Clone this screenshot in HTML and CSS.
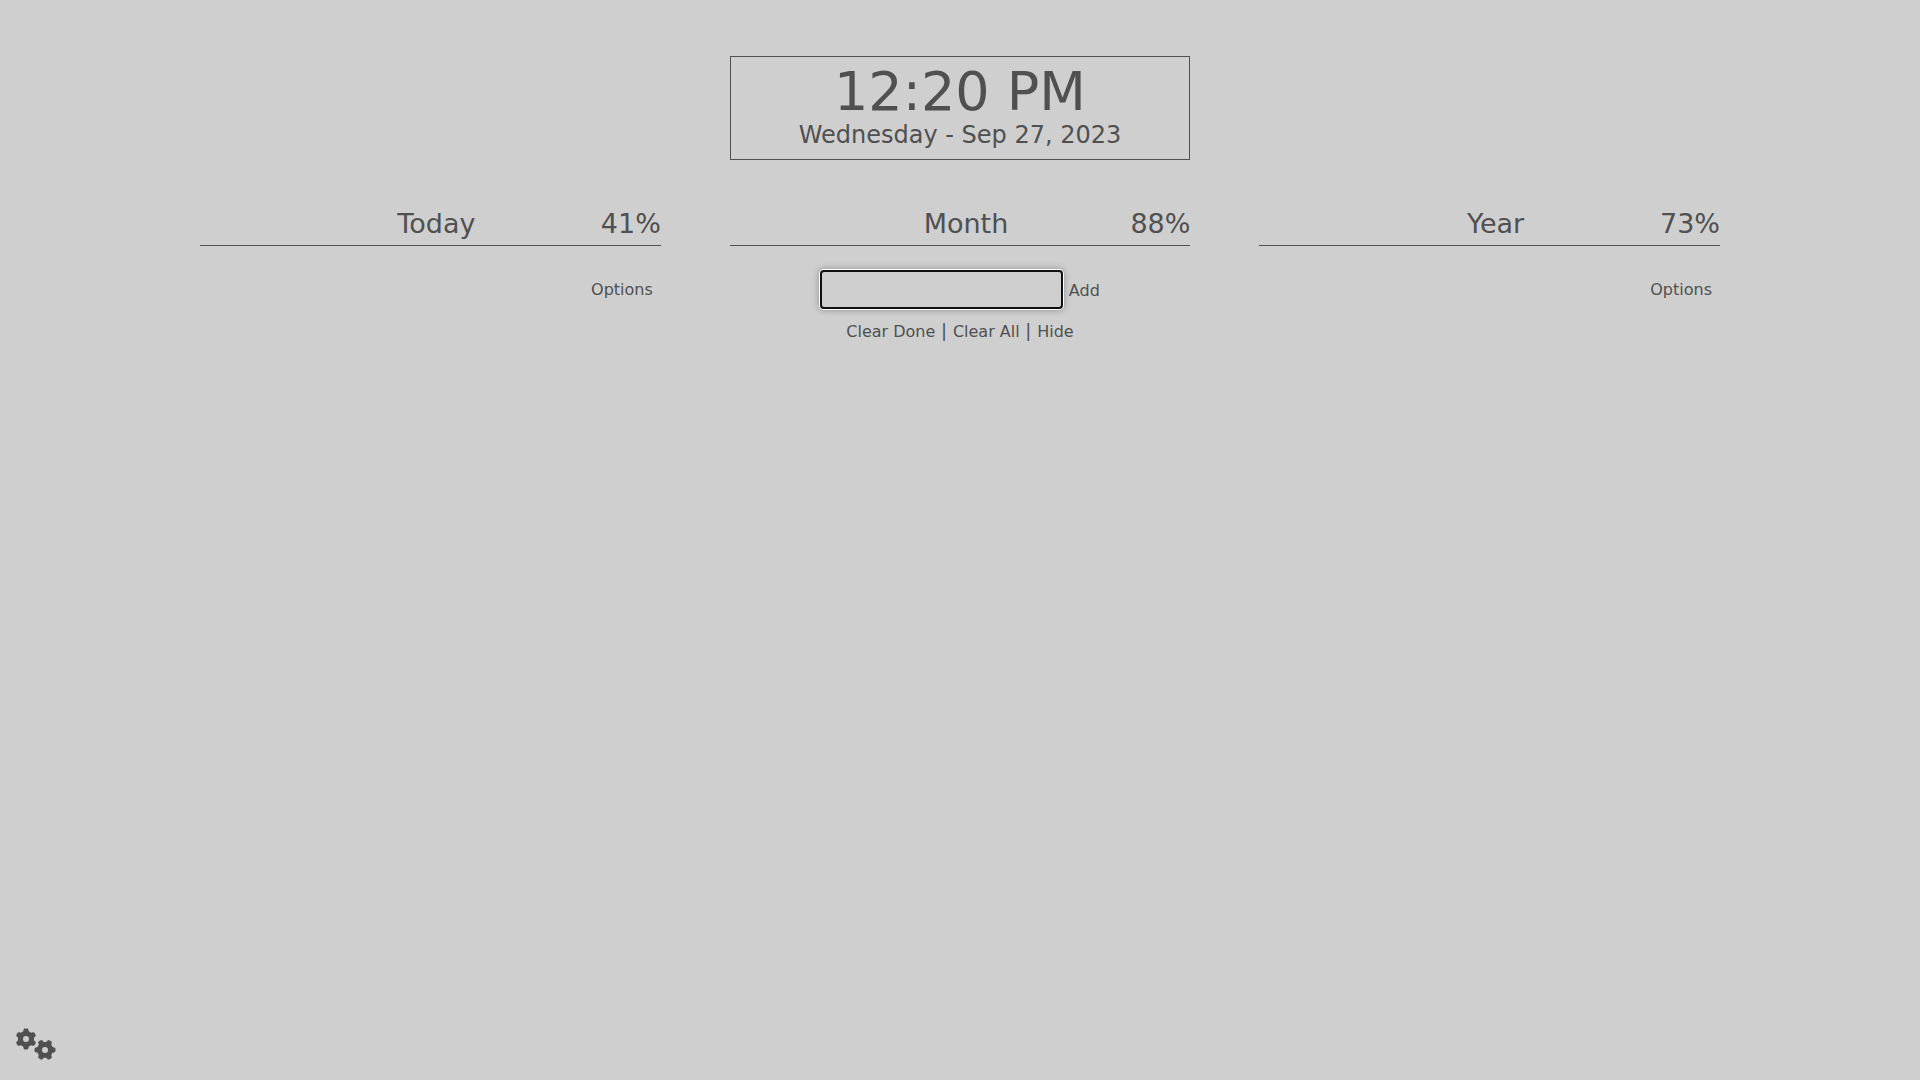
FILE: index.html
```html
<!DOCTYPE html>
<html lang="en">
<head>
<meta charset="utf-8">
<title>New Tab</title>
<link rel="stylesheet" href="styles.css">
</head>
<body>
<main class="page">
  <header class="clock">
    <div class="time">12:20 PM</div>
    <div class="date">Wednesday - Sep 27, 2023</div>
  </header>
  <div class="columns">
    <section class="column">
      <div class="head"><span class="title">Today</span><span class="percent">41%</span></div>
      <div class="options"><a>Options</a></div>
    </section>
    <section class="column">
      <div class="head"><span class="title">Month</span><span class="percent">88%</span></div>
      <form class="add-row"><input class="task" type="text" aria-label="Task"><a class="add">Add</a></form>
      <div class="actions"><a>Clear Done</a><span class="bar">|</span><a>Clear All</a><span class="bar">|</span><a>Hide</a></div>
    </section>
    <section class="column">
      <div class="head"><span class="title">Year</span><span class="percent">73%</span></div>
      <div class="options"><a>Options</a></div>
    </section>
  </div>
</main>
<svg class="gears" viewBox="0 0 640 512" aria-hidden="true">
  <defs>
    <path id="gear" d="M308.5 135.3c7.1-6.3 9.9-16.2 6.2-25c-2.3-5.3-4.8-10.5-7.6-15.5L304 89.4c-3-5-6.3-9.9-9.8-14.6c-5.7-7.6-15.7-10.1-24.7-7.1l-28.2 9.3c-10.7-8.8-23-16-36.2-20.9L199 27.1c-1.9-9.3-9.1-16.7-18.5-17.8C173.9 8.4 167.2 8 160.4 8h-.7c-6.8 0-13.5 .4-20.1 1.2c-9.4 1.1-16.6 8.6-18.5 17.8L115 56.1c-13.3 5-25.5 12.1-36.2 20.9L50.5 67.8c-9-3-19-.5-24.7 7.1c-3.5 4.7-6.8 9.6-9.9 14.6l-3 5.3c-2.8 5-5.3 10.2-7.6 15.6c-3.7 8.7-.9 18.6 6.2 25l22.2 19.8C32.6 161.9 32 168.9 32 176s.6 14.1 1.7 20.9L11.5 216.7c-7.1 6.3-9.9 16.2-6.2 25c2.3 5.3 4.8 10.5 7.6 15.6l3 5.2c3 5.1 6.3 9.9 9.9 14.6c5.7 7.6 15.7 10.1 24.7 7.1l28.2-9.3c10.7 8.8 23 16 36.2 20.9l6.1 29.1c1.9 9.3 9.1 16.7 18.5 17.8c6.7 .8 13.5 1.2 20.4 1.2s13.7-.4 20.4-1.2c9.4-1.1 16.6-8.6 18.5-17.8l6.1-29.1c13.3-5 25.5-12.1 36.2-20.9l28.2 9.3c9 3 19 .5 24.7-7.1c3.5-4.7 6.8-9.5 9.8-14.6l3.1-5.4c2.8-5 5.3-10.2 7.6-15.5c3.7-8.7 .9-18.6-6.2-25l-22.2-19.8c1.1-6.8 1.7-13.8 1.7-20.9s-.6-14.1-1.7-20.9l22.2-19.8zM112 176a48 48 0 1 1 96 0 48 48 0 1 1 -96 0z"/>
  </defs>
  <use href="#gear"/>
  <use href="#gear" transform="translate(464 350) rotate(90) translate(-160 -176)"/>
</svg>
</body>
</html>
```
FILE: styles.css
```css
* { box-sizing: border-box; }
body {
  margin: 0;
  min-height: 100vh;
  background: #cfcfcf;
  color: #505050;
  font: 16px/20px "DejaVu Sans", sans-serif;
}
.page { padding: 56px 200px 0; }
.clock {
  width: 460.8px;
  height: 104px;
  margin: 0 auto;
  padding-top: 5px;
  border: 1px solid #505050;
  text-align: center;
}
.time { font-size: 54px; line-height: 60px; }
.date { font-size: 24px; line-height: 26px; }
.columns { display: flex; justify-content: space-between; margin-top: 48px; }
.column { width: 460.8px; }
.head {
  display: grid;
  grid-template-columns: 1fr auto 1fr;
  height: 38px;
  border-bottom: 1px solid #505050;
  font-size: 27px;
  line-height: 32px;
}
.title { grid-column: 2; margin-left: 12px; }
.percent { text-align: right; }
.options { margin-top: 34px; padding-right: 8px; text-align: right; }
.add-row { display: flex; justify-content: center; margin-top: 24px; }
.task {
  width: 243px;
  height: 39px;
  padding: 0 8px;
  border: 2px solid #101010;
  border-radius: 4px;
  outline: none;
  background: transparent;
  box-shadow: 0 0 0 1px #fff, 0 0 7px 1px rgba(0, 0, 0, 0.3);
  font: inherit;
}
.add { margin: 11px 0 0 5.72px; }
.actions {
  display: flex;
  justify-content: center;
  align-items: baseline;
  gap: 5.72px;
  margin-top: 12px;
}
.bar { font-size: 18px; }
.gears {
  position: fixed;
  left: 16px;
  bottom: 20px;
  width: 40px;
  height: 32px;
  fill: #505050;
}
```
